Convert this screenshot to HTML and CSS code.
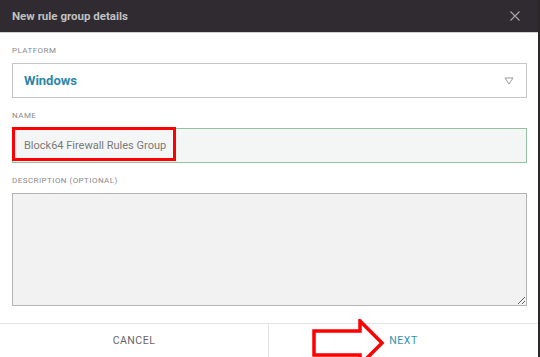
FILE: index.html
```html
<!DOCTYPE html>
<html>
<head>
<meta charset="utf-8">
<link rel="stylesheet" href="styles.css">
</head>
<body>
<div class="dialog">
  <div class="header">
    <span class="title">New rule group details</span>
    <svg class="close" width="10" height="10" viewBox="0 0 10 10"><path d="M0.5 0.5 L9.5 9.5 M9.5 0.5 L0.5 9.5" stroke="#a8a8a8" stroke-width="1.1" fill="none"/></svg>
  </div>
  <div class="content">
    <div class="field">
      <label class="label">PLATFORM</label>
      <div class="select">
        <span class="select-value">Windows</span>
        <svg width="10" height="8" viewBox="0 0 10 8"><path d="M1 1 H9 L5 7 Z" stroke="#999" stroke-width="1" fill="none" stroke-linejoin="round"/></svg>
      </div>
    </div>
    <div class="field">
      <label class="label">NAME</label>
      <div class="input-wrap">
        <div class="input">Block64 Firewall Rules Group</div>
        <div class="highlight"></div>
      </div>
    </div>
    <div class="field">
      <label class="label">DESCRIPTION (OPTIONAL)</label>
      <textarea class="textarea"></textarea>
    </div>
  </div>
  <div class="footer">
    <div class="btn cancel">CANCEL</div>
    <div class="btn next">NEXT</div>
    <svg class="arrow" width="80" height="50" viewBox="0 0 80 50"><path d="M2 12 H48 V2 L70 24 L48 46 V36 H2 Z" stroke="#ff0000" stroke-width="3.5" fill="#ffffff"/></svg>
  </div>
</div>
</body>
</html>
```
FILE: styles.css
```css
* { box-sizing: border-box; }
html, body { margin: 0; padding: 0; }
body {
  width: 540px;
  height: 357px;
  overflow: hidden;
  background: #ffffff;
  font-family: Roboto, "Liberation Sans", sans-serif;
}
.dialog {
  width: 540px;
  height: 357px;
  border-right: 2px solid #2b2729;
  display: flex;
  flex-direction: column;
}
.header {
  height: 33px;
  flex: none;
  background: #2f2b30;
  border-bottom: 1px solid #d0d0d0;
  display: flex;
  align-items: center;
  justify-content: space-between;
  padding: 0 18px 0 12px;
}
.title {
  color: #c0c0c0;
  font-size: 11.5px;
  font-weight: 700;
}
.close { display: block; }
.content {
  flex: 1;
  padding: 13px 11px 0 12px;
  display: flex;
  flex-direction: column;
}
.field {
  display: flex;
  flex-direction: column;
  margin-bottom: 13px;
}
.label {
  font-size: 8px;
  line-height: 10px;
  color: #8a8a8a;
  letter-spacing: 0.45px;
  margin-bottom: 7px;
}
.select {
  height: 35px;
  border: 1px solid #c6c6c6;
  display: flex;
  align-items: center;
  justify-content: space-between;
  padding: 0 12px 0 11px;
}
.select-value {
  color: #2a87a8;
  font-size: 13px;
  font-weight: 700;
}
.input-wrap { position: relative; }
.input {
  height: 35px;
  border: 1px solid #93c1a1;
  background: #f3f6f5;
  color: #7a7a7a;
  font-size: 11px;
  display: flex;
  align-items: center;
  padding: 0 11px;
}
.highlight {
  position: absolute;
  left: 0;
  top: -1px;
  width: 164px;
  height: 34px;
  border: 3.5px solid #ff0000;
}
.textarea {
  display: block;
  width: 100%;
  height: 113px;
  border: 1px solid #b4b4b4;
  background: #f2f2f2;
  resize: vertical;
  margin: 0;
  padding: 0;
  outline: none;
}
.footer {
  height: 34px;
  flex: none;
  border-top: 1px solid #e4e4e4;
  display: grid;
  grid-template-columns: 269px 1fr;
  position: relative;
}
.btn {
  display: flex;
  align-items: center;
  justify-content: center;
  font-size: 10.5px;
  letter-spacing: 0.5px;
}
.cancel {
  color: #666666;
  border-right: 1px solid #e4e4e4;
}
.next { color: #2f93b0; }
.arrow {
  position: absolute;
  left: 312px;
  top: -5px;
}
```
